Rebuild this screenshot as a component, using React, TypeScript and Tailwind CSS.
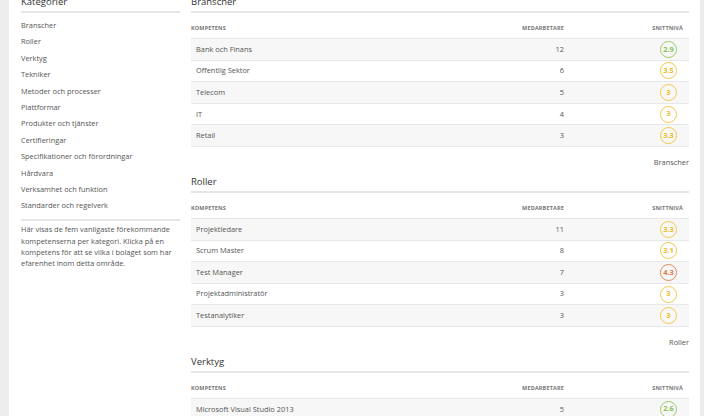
import React from "react";

type Row = { name: string; count: number; level: string; color: "green" | "yellow" | "orange" };

const sections: { title: string; rows: Row[] }[] = [
  {
    title: "Branscher",
    rows: [
      { name: "Bank och Finans", count: 12, level: "2.9", color: "green" },
      { name: "Offentlig Sektor", count: 6, level: "3.5", color: "yellow" },
      { name: "Telecom", count: 5, level: "3", color: "yellow" },
      { name: "IT", count: 4, level: "3", color: "yellow" },
      { name: "Retail", count: 3, level: "3.3", color: "yellow" },
    ],
  },
  {
    title: "Roller",
    rows: [
      { name: "Projektledare", count: 11, level: "3.3", color: "yellow" },
      { name: "Scrum Master", count: 8, level: "3.1", color: "yellow" },
      { name: "Test Manager", count: 7, level: "4.3", color: "orange" },
      { name: "Projektadministratör", count: 3, level: "3", color: "yellow" },
      { name: "Testanalytiker", count: 3, level: "3", color: "yellow" },
    ],
  },
  {
    title: "Verktyg",
    rows: [
      { name: "Microsoft Visual Studio 2013", count: 5, level: "2.6", color: "green" },
      { name: "Microsoft Visual Studio", count: 4, level: "3", color: "yellow" },
      { name: "Git", count: 4, level: "3", color: "yellow" },
    ],
  },
];

const categories = [
  "Branscher",
  "Roller",
  "Verktyg",
  "Tekniker",
  "Metoder och processer",
  "Plattformar",
  "Produkter och tjänster",
  "Certifieringar",
  "Specifikationer och förordningar",
  "Hårdvara",
  "Verksamhet och funktion",
  "Standarder och regelverk",
];

function Heading({ children }: { children: React.ReactNode }) {
  return (
    <div className="h-[19px] flex items-end pb-[2px] border-b-2 border-[#e6e6e6] text-[9.5px] leading-[14px] text-[#333]">
      {children}
    </div>
  );
}

function Circle({ level, color }: { level: string; color: Row["color"] }) {
  const cls =
    color === "green"
      ? "border-[#9cc96b] text-[#8dbf55]"
      : color === "orange"
      ? "border-[#e2895a] text-[#dd7a45]"
      : "border-[#f2c94c] text-[#edbd2e]";
  return (
    <div
      className={`w-[17px] h-[17px] rounded-full border flex items-center justify-center text-[7.5px] font-bold leading-none ${cls}`}
    >
      {level}
    </div>
  );
}

function Section({ title, rows }: { title: string; rows: Row[] }) {
  return (
    <div>
      <Heading>{title}</Heading>
      <div className="h-[25px] flex items-end pb-[6px] text-[5.5px] leading-[8px] font-bold tracking-[0.15px] text-[#777] uppercase">
        <div className="flex-1">Kompetens</div>
        <div className="w-[100px] text-right">Medarbetare</div>
        <div className="w-[125px] flex justify-end pr-[6px]">Snittnivå</div>
      </div>
      <div className="border-b border-[#e8e8e8]">
        {rows.map((r, i) => (
          <div
            key={r.name}
            className={`h-[21.6px] flex items-center border-t border-[#e8e8e8] text-[7.4px] text-[#555] ${
              i % 2 === 0 ? "bg-[#f7f7f7]" : "bg-white"
            }`}
          >
            <div className="flex-1 pl-[5px]">{r.name}</div>
            <div className="w-[100px] text-right">{r.count}</div>
            <div className="w-[125px] flex justify-end pr-[12px]">
              <Circle level={r.level} color={r.color} />
            </div>
          </div>
        ))}
      </div>
      <div className="mt-[9px] h-[13px] text-right text-[7.4px] leading-[13px] text-[#555]">{title}</div>
      <div className="h-[5px]" />
    </div>
  );
}

export default function App() {
  return (
    <div
      className="w-[704px] h-[416px] overflow-hidden bg-[#ededed] flex"
      style={{ fontFamily: '"Open Sans", "Noto Sans", sans-serif' }}
    >
      <div className="ml-[9px] w-[691px] h-full bg-white flex pl-[12px] pr-[11px]">
        <aside className="w-[159px] mt-[-6px] text-[#555]">
          <Heading>Kategorier</Heading>
          <ul className="pt-[4px] pb-[5px]">
            {categories.map((c) => (
              <li key={c} className="text-[7.4px] leading-[16.4px]">
                {c}
              </li>
            ))}
          </ul>
          <div className="border-t-2 border-[#e6e6e6]" />
          <p className="mt-[3.4px] text-[7.4px] leading-[11.3px]">
            Här visas de fem vanligaste förekommande kompetenserna per kategori. Klicka på en kompetens för att se
            vilka i bolaget som har efarenhet inom detta område.
          </p>
        </aside>
        <main className="ml-[11px] w-[498px] mt-[-6px]">
          {sections.map((s) => (
            <Section key={s.title} title={s.title} rows={s.rows} />
          ))}
        </main>
      </div>
    </div>
  );
}
